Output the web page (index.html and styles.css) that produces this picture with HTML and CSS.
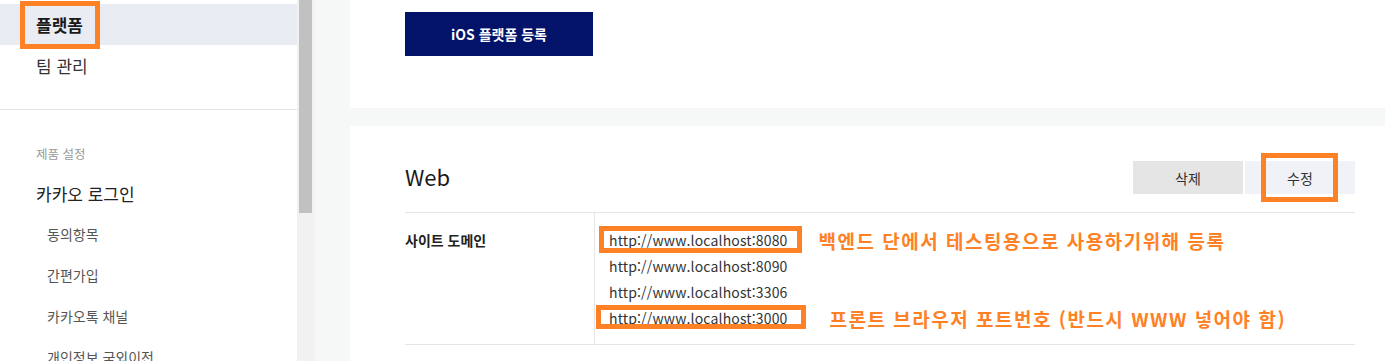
FILE: index.html
```html
<!DOCTYPE html>
<html lang="ko">
<head>
    <meta charset="UTF-8">
    <meta name="viewport" content="width=device-width, initial-scale=1.0">
    <title>플랫폼</title>
    <link rel="stylesheet" href="styles.css">
</head>
<body>
    <aside class="sidebar">
        <nav class="side-nav">
            <a class="nav-item active"><span class="mark-box">플랫폼</span></a>
            <a class="nav-item">팀 관리</a>
        </nav>
        <div class="side-group">
            <p class="group-title">제품 설정</p>
            <a class="group-head">카카오 로그인</a>
            <a class="sub-item">동의항목</a>
            <a class="sub-item">간편가입</a>
            <a class="sub-item">카카오톡 채널</a>
            <a class="sub-item">개인정보 국외이전</a>
        </div>
    </aside>
    <div class="scrollbar"><div class="thumb"></div></div>

    <main class="content">
        <section class="card card-top">
            <button class="btn-primary">iOS 플랫폼 등록</button>
        </section>

        <section class="card card-web">
            <div class="card-head">
                <h2>Web</h2>
                <div class="actions">
                    <button class="btn btn-delete">삭제</button>
                    <button class="btn btn-edit"><span class="edit-mark"></span>수정</button>
                </div>
            </div>
            <div class="info-row">
                <div class="info-label">사이트 도메인</div>
                <ul class="domain-list">
                    <li><span class="url marked">http://www.localhost:8080</span><span class="note">백엔드 단에서 테스팅용으로 사용하기위해 등록</span></li>
                    <li><span class="url">http://www.localhost:8090</span></li>
                    <li><span class="url">http://www.localhost:3306</span></li>
                    <li><span class="url marked marked-2">http://www.localhost:3000</span><span class="note note-2">프론트 브라우저 포트번호 (반드시 WWW 넣어야 함)</span></li>
                </ul>
            </div>
        </section>
    </main>
</body>
</html>
```

FILE: styles.css
```css
* {
    box-sizing: border-box;
}
body {
    font-family: "Noto Sans CJK KR", "Noto Sans", sans-serif;
    margin: 0;
    padding: 0;
    background-color: #f6f7f7;
    color: #222;
    display: flex;
    height: 361px;
    overflow: hidden;
}
a {
    display: block;
    text-decoration: none;
    color: inherit;
}

/* sidebar */
.sidebar {
    width: 297px;
    flex: none;
    background: #fff;
    padding-top: 4px;
}
.side-nav {
    padding-bottom: 23px;
    border-bottom: 1px solid #e5e5e5;
}
.nav-item {
    height: 41px;
    line-height: 41px;
    padding-left: 36px;
    font-size: 17px;
    color: #333;
}
.nav-item.active {
    background: #e9ecf3;
    font-weight: bold;
    color: #1a1a1a;
}
.mark-box {
    position: relative;
}
.mark-box::after {
    content: "";
    position: absolute;
    left: -16px;
    right: -17px;
    top: -11px;
    bottom: -12px;
    border: 5px solid #ff8125;
}
.side-group {
    padding-top: 36px;
}
.group-title {
    margin: 0 0 20px;
    padding-left: 36px;
    font-size: 12.5px;
    line-height: 16px;
    color: #999;
}
.group-head {
    padding-left: 36px;
    font-size: 17px;
    line-height: 24px;
    margin-bottom: 8px;
    color: #222;
}
.sub-item {
    padding-left: 47px;
    font-size: 14px;
    line-height: 41px;
    color: #555;
}

.scrollbar {
    width: 18px;
    flex: none;
    background: #f1f1f1;
    padding: 0 3px 0 2px;
}
.thumb {
    height: 213px;
    background: #c1c1c1;
}

/* main content */
.content {
    flex: 1;
    padding-left: 35px;
    display: flex;
    flex-direction: column;
    gap: 18px;
}
.card {
    background: #fff;
    padding: 0 30px 0 55px;
}
.card-top {
    height: 108px;
    padding-top: 12px;
}
.btn-primary {
    width: 188px;
    height: 44px;
    border: none;
    background: #04136a;
    color: #fff;
    font-family: inherit;
    font-size: 14px;
    font-weight: bold;
}
.card-web {
    flex: 1;
    padding-top: 35px;
}
.card-head {
    display: flex;
    align-items: center;
    justify-content: space-between;
    height: 33px;
    margin-bottom: 18px;
}
.card-head h2 {
    margin: 0;
    font-size: 22px;
    font-weight: normal;
    color: #1a1a1a;
    position: relative;
    top: -2px;
}
.actions {
    display: flex;
    gap: 2px;
}
.btn {
    width: 110px;
    height: 33px;
    border: none;
    font-family: inherit;
    font-size: 14px;
    color: #333;
}
.btn-delete {
    background: #e5e5e5;
}
.btn-edit {
    background: #f0f2f7;
    position: relative;
}
.edit-mark {
    position: absolute;
    left: 16px;
    right: 17px;
    top: -8px;
    bottom: -8px;
    border: 5px solid #ff8125;
}
.info-row {
    display: flex;
    border-top: 1px solid #e5e5e5;
    border-bottom: 1px solid #e5e5e5;
}
.info-label {
    width: 190px;
    border-right: 1px solid #e5e5e5;
    padding-top: 14px;
    font-size: 14px;
    font-weight: bold;
    line-height: 26px;
    color: #222;
}
.domain-list {
    list-style: none;
    margin: 0;
    padding: 14px 0 13px 14px;
}
.domain-list li {
    display: flex;
    align-items: center;
    height: 26px;
}
.url {
    font-size: 14px;
    letter-spacing: 0.15px;
    color: #333;
}
.marked {
    position: relative;
}
.marked::after {
    content: "";
    position: absolute;
    left: -10px;
    right: -15px;
    top: -4px;
    bottom: -3px;
    border: 5px solid #ff8125;
}
.marked-2::after {
    left: -13px;
    right: -19px;
    top: -3px;
    bottom: -1px;
}
.note {
    margin-left: 31px;
    font-size: 19px;
    letter-spacing: 1.5px;
    font-weight: bold;
    color: #ff8125;
}
.note-2 {
    margin-left: 42px;
}
```
